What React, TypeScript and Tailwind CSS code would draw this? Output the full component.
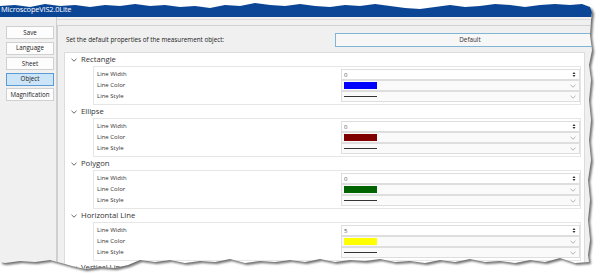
import React from "react";

const W =
  "M0 6 L15 5 L30 7 L45 4 L60 6 L75 5 L90 7 L105 5 L120 6 L135 4 L150 6 L165 5 L180 7 L195 6 L210 8 L225 5 L240 6 L255 3 L270 5 L285 6 L300 4 L315 6 L330 7 L345 5 L360 6 L375 4 L390 6 L405 8 L420 9 L435 7 L450 5 L465 7 L480 6 L495 4 L510 5 L525 7 L540 5 L555 4 L570 5 L582 4 L590 7 L592 12 L591 20 L590 35 L592 50 L589 65 L591 80 L589 100 L591 120 L589 140 L591 160 L588 180 L590 200 L588 220 L590 240 L588 255 L589 262 L575 263 L560 258 L545 262 L530 260 L515 263 L500 261 L485 262 L470 259 L455 262 L440 260 L425 263 L410 261 L395 262 L380 259 L365 261 L350 260 L335 262 L320 259 L305 262 L290 260 L275 262 L260 261 L245 263 L230 259 L215 262 L200 261 L185 263 L170 260 L155 262 L140 260 L128 265 L115 268 L100 267 L85 269 L72 266 L65 264 L50 260 L35 262 L20 261 L5 263 L0 262 Z";

const Chevron = ({ color = "#555" }: { color?: string }) => (
  <svg width="6" height="4" viewBox="0 0 6 4">
    <polyline points="0.5,0.8 3,3.2 5.5,0.8" fill="none" stroke={color} strokeWidth="0.9" />
  </svg>
);

const SpinArrows = () => (
  <svg width="4" height="7" viewBox="0 0 4 7">
    <polygon points="0.5,3 2,1 3.5,3" fill="#333" />
    <polygon points="0.5,4 2,6 3.5,4" fill="#333" />
  </svg>
);

type Sec = { name: string; width: string; color: string; headerOnly?: boolean };
const sections: Sec[] = [
  { name: "Rectangle", width: "0", color: "#0000ff" },
  { name: "Ellipse", width: "0", color: "#800000" },
  { name: "Polygon", width: "0", color: "#006400" },
  { name: "Horizontal Line", width: "5", color: "#ffff00" },
  { name: "Vertical Line", width: "5", color: "#ff0000", headerOnly: true },
];

const navs = ["Save", "Language", "Sheet", "Object", "Magnification"];

function Section({ s }: { s: Sec }) {
  return (
    <div className="flex flex-col">
      <div className="h-[13px] flex items-center pl-[6px] gap-[4px] text-[7.7px] text-[#333]">
        <Chevron />
        <span>{s.name}</span>
      </div>
      {!s.headerOnly && (
        <div className="ml-[28px] mr-[3px] h-[39px] border border-[#e6e6e6] py-[2px] flex flex-col">
          {[
            ["Line Width", "spin"],
            ["Line Color", "color"],
            ["Line Style", "style"],
          ].map(([label, kind]) => (
            <div key={label} className="h-[11.5px] flex items-center">
              <div className="w-[247px] pl-[3px] text-[6px] text-[#333]">{label}</div>
              <div
                className={
                  "flex-1 h-full flex items-center pl-[2px] pr-[3px] border border-[#dedede] " +
                  (kind === "spin" ? "bg-white" : "bg-[#fafafa]")
                }
              >
                {kind === "spin" && (
                  <>
                    <span className="text-[6px] text-[#555] flex-1 leading-none">{s.width}</span>
                    <SpinArrows />
                  </>
                )}
                {kind === "color" && (
                  <>
                    <div className="w-[33px] h-[7px] flex-none" style={{ background: s.color }} />
                    <div className="flex-1" />
                    <Chevron color="#aaa" />
                  </>
                )}
                {kind === "style" && (
                  <>
                    <div className="w-[33px] h-[1px] bg-[#333] flex-none" />
                    <div className="flex-1" />
                    <Chevron color="#aaa" />
                  </>
                )}
              </div>
            </div>
          ))}
        </div>
      )}
    </div>
  );
}

export default function App() {
  return (
    <div
      className="relative w-[600px] h-[274px] overflow-hidden bg-white"
      style={{ fontFamily: '"Open Sans", "Noto Sans", sans-serif' }}
    >
      <div className="flex flex-col w-[610px] h-full bg-[#f0f0f0]">
        <div className="h-[17px] flex-none bg-[#0b4595] text-white text-[7.5px] flex items-end pb-[2px] pl-[1px] tracking-[-0.2px]">
          MicroscopeVIS2.0Lite
        </div>
        <div className="flex flex-1 min-h-0">
          <div className="w-[57px] flex-none border-r border-[#cfcfcf] pt-[9px] pl-[6px] flex flex-col gap-[2.5px]">
            {navs.map((n) => (
              <div
                key={n}
                className={
                  "w-[48px] h-[13px] flex items-center justify-center text-[6.2px] text-[#222] border " +
                  (n === "Object" ? "bg-[#cce4f7] border-[#5b9bd5]" : "bg-[#fdfdfd] border-[#d0d0d0]")
                }
              >
                {n}
              </div>
            ))}
          </div>
          <div className="flex-1 flex flex-col mt-[2px] border-t border-[#dadada]">
            <div className="flex-1 flex flex-col mt-[5px] border-t border-l border-[#d0d0d0] min-h-0">
              <div className="h-[26px] flex-none flex items-center pl-[8px] pt-[1px]">
                <span className="w-[269px] text-[6.3px] text-[#222]">
                  Set the default properties of the measurement object:
                </span>
                <div className="w-[270px] h-[14px] flex items-center justify-center border border-[#7fb6d6] bg-[#f7f7f7] text-[6.3px] text-[#333]">
                  Default
                </div>
              </div>
              <div className="ml-[6px] w-[521px] flex-1 bg-white border border-[#dcdcdc] overflow-hidden flex flex-col">
                {sections.map((s) => (
                  <Section key={s.name} s={s} />
                ))}
              </div>
            </div>
          </div>
        </div>
      </div>
      <svg className="absolute inset-0 pointer-events-none" width="600" height="274">
        <defs>
          <filter id="blur" x="-10%" y="-10%" width="120%" height="120%">
            <feGaussianBlur stdDeviation="1.2" />
          </filter>
          <clipPath id="outside">
            <path clipRule="evenodd" d={`M0 0H600V274H0Z ${W}`} />
          </clipPath>
        </defs>
        <path fillRule="evenodd" fill="#ffffff" d={`M0 0H600V274H0Z ${W}`} />
        <g clipPath="url(#outside)">
          <path d={W} fill="#6f6f6f" filter="url(#blur)" transform="translate(2,2)" />
        </g>
      </svg>
    </div>
  );
}
